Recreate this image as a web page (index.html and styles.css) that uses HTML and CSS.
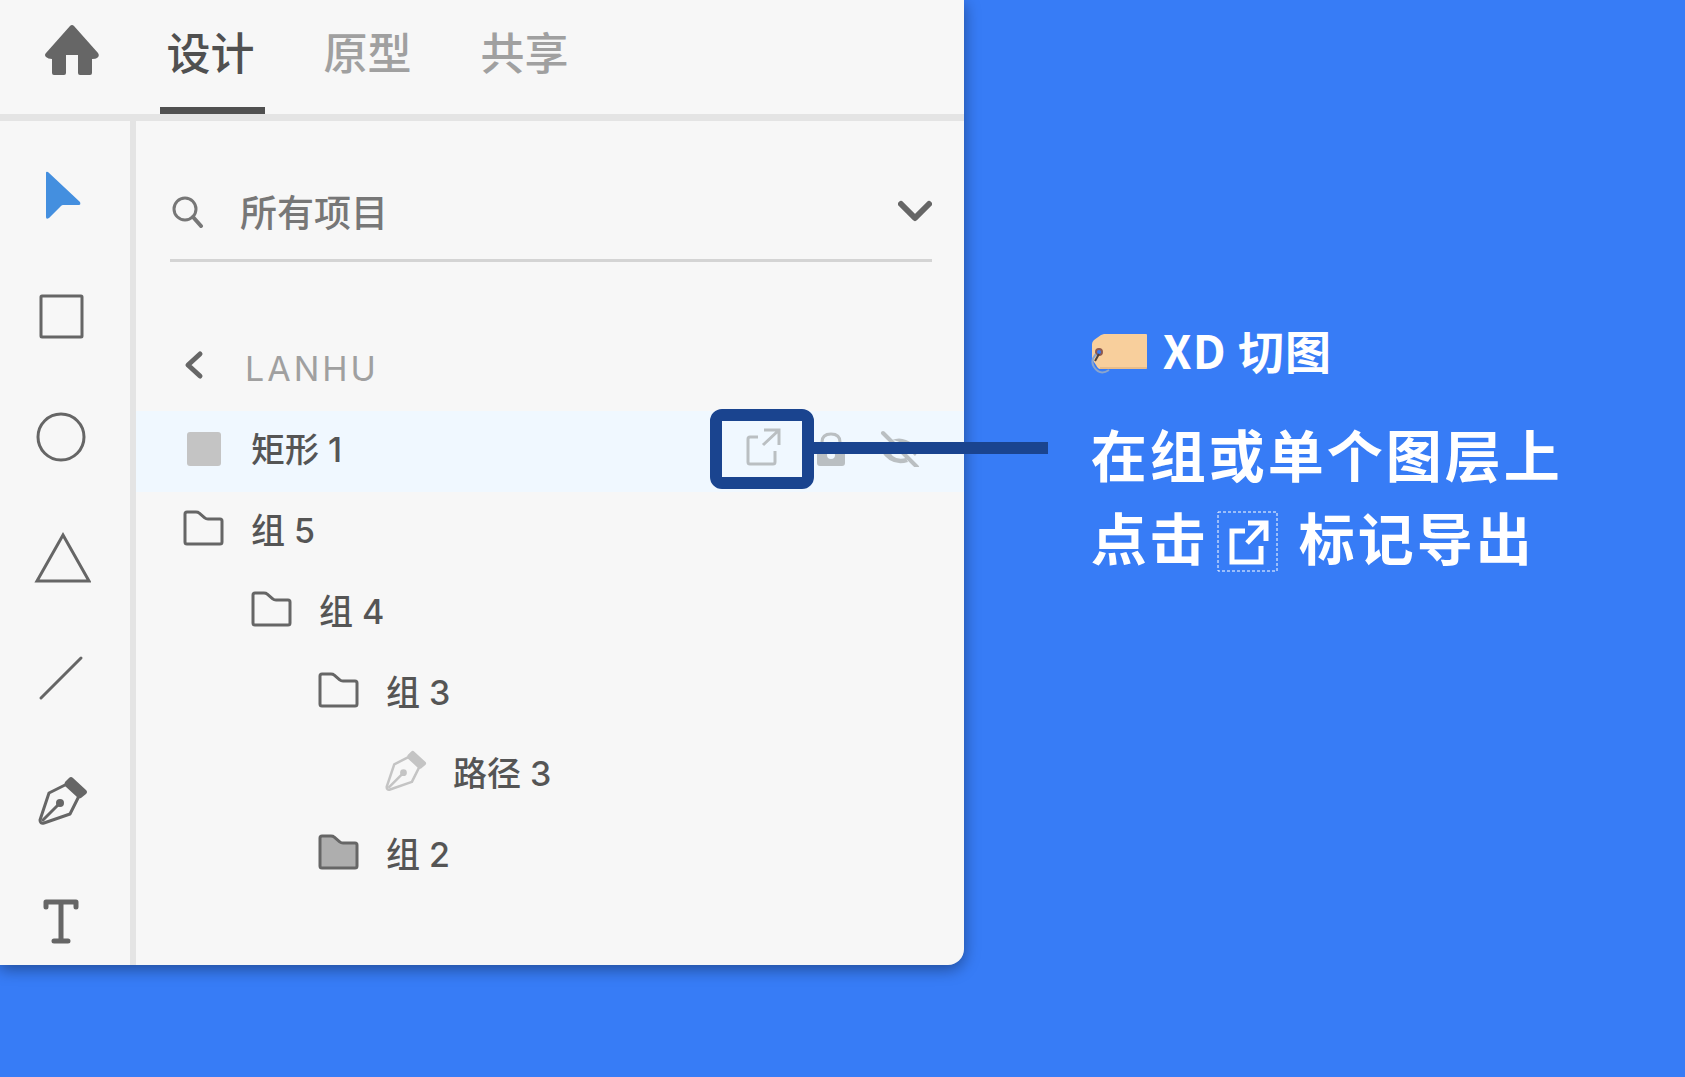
FILE: index.html
```html
<!DOCTYPE html>
<html lang="zh-CN">
<head>
  <meta charset="UTF-8" />
  <meta name="viewport" content="width=device-width, initial-scale=1" />
  <title>XD 切图</title>
  <link rel="stylesheet" href="styles.css">
</head>
<body>
  <!-- Shared icons -->
  <svg class="sprite" aria-hidden="true">
    <symbol id="folder" viewBox="0 0 42 42">
      <path d="M4 5H13Q15 5 16 6L22 11Q23 12 25 12H37Q39 12 39 14V35Q39 37 37 37H4Q2 37 2 35V7Q2 5 4 5Z" stroke="#666" stroke-width="3"/>
    </symbol>
    <symbol id="pen" viewBox="0 0 50 50">
      <path d="M29 8L11 17L2 44Q2 48 6 47L32 38L41 20" fill="none" stroke="currentColor" stroke-width="3" stroke-linejoin="round"/>
      <path d="M4 45L21 28" stroke="currentColor" stroke-width="3"/>
      <circle cx="22" cy="27" r="4" fill="currentColor"/>
      <path d="M31 2Q33 0 35 2L48 14Q50 16 48 18L43 22Q41 23 39 21L27 10Q26 8 27 6Z" fill="currentColor"/>
    </symbol>
  </svg>

  <main class="panel">
    <header class="top-bar">
      <button class="home" aria-label="主页">
        <svg width="56" height="50" viewBox="0 0 56 50"><path d="M26 1Q28 -1 30 1L54 28Q56 31 53 33Q52 34 48 34V48Q48 50 46 50H36Q34 50 34 48V30H22V48Q22 50 20 50H10Q8 50 8 48V34Q4 34 2 32Q0 30 2 28Z" fill="#666"/></svg>
      </button>
      <nav class="tabs">
        <button class="tab active">设计</button>
        <button class="tab">原型</button>
        <button class="tab">共享</button>
      </nav>
    </header>

    <div class="workspace">
      <aside class="tools">
        <button aria-label="选择">
          <svg width="60" height="60" viewBox="0 0 60 60"><path class="cursor" d="M15 7Q15 5 17 6L49 36Q50 39 48 39H32Q31 39 30 40L18 52Q15 54 15 51Z"/></svg>
        </button>
        <button aria-label="矩形">
          <svg width="60" height="60" viewBox="0 0 60 60"><rect x="10" y="9" width="41" height="41" rx="1"/></svg>
        </button>
        <button aria-label="椭圆">
          <svg width="60" height="60" viewBox="0 0 60 60"><circle cx="30" cy="29" r="23"/></svg>
        </button>
        <button aria-label="多边形">
          <svg width="60" height="60" viewBox="0 0 60 60"><path d="M32 6L58 52H6Z"/></svg>
        </button>
        <button aria-label="直线">
          <svg width="60" height="60" viewBox="0 0 60 60"><path d="M10 48L50 8" stroke-linecap="round"/></svg>
        </button>
        <button aria-label="钢笔">
          <svg width="60" height="60" viewBox="0 0 60 60"><use href="#pen" x="7" y="5" width="50" height="50"/></svg>
        </button>
        <button aria-label="文本">
          <svg width="60" height="60" viewBox="0 0 60 60"><path d="M15 15V10H45V15M30 10V49M23 49H37" stroke-width="5" stroke-linecap="round" stroke-linejoin="round"/></svg>
        </button>
      </aside>

      <section class="layers">
        <div class="search">
          <svg width="34" height="34" viewBox="0 0 34 34"><circle cx="15" cy="15" r="11" fill="none" stroke="#777" stroke-width="3"/><path d="M23 23L31 32" stroke="#777" stroke-width="4" stroke-linecap="round"/></svg>
          <input type="text" aria-label="搜索图层" value="所有项目" />
          <button aria-label="展开">
            <svg width="34" height="22" viewBox="0 0 34 22"><path d="M3 4L17 18L31 4" fill="none" stroke="#666" stroke-width="6" stroke-linecap="round" stroke-linejoin="round"/></svg>
          </button>
        </div>

        <button class="back">
          <svg width="42" height="36" viewBox="0 0 42 36"><path d="M17 4L5 15L17 26" fill="none" stroke="#666" stroke-width="5" stroke-linecap="round" stroke-linejoin="round"/></svg>
          <span>LANHU</span>
        </button>

        <ul class="layer-list">
          <li class="layer selected">
            <svg class="layer-icon" viewBox="0 0 42 42"><rect x="4" y="6" width="34" height="34" rx="3" fill="#c4c4c4"/></svg>
            <span>矩形 1</span>
            <div class="actions">
              <button class="export" aria-label="标记导出">
                <svg width="40" height="40" viewBox="0 0 40 40"><path d="M14 10H6Q4 10 4 12V35Q4 37 6 37H29Q31 37 31 35V24M20 3H35V18M34 4L19 18" fill="none" stroke="#babfc2" stroke-width="3"/></svg>
              </button>
              <button aria-label="锁定">
                <svg width="40" height="40" viewBox="0 0 40 40"><path d="M10 20V15Q10 7 19 7T28 15V20" fill="none" stroke="#babfc2" stroke-width="3"/><path fill="#babfc2" fill-rule="evenodd" d="M8 18H30Q33 18 33 21V36Q33 39 30 39H8Q5 39 5 36V21Q5 18 8 18ZM15 28A4 4 0 1 0 23 28A4 4 0 1 0 15 28Z"/></svg>
              </button>
              <button aria-label="隐藏">
                <svg width="40" height="40" viewBox="0 0 40 40"><path d="M12 13Q19 10 26 13Q34 16 39 24L35 29L25 19Q18 13 12 13Z" fill="#babfc2"/><path d="M1 24L7 19Q12 35 26 31L28 35Q11 40 1 24Z" fill="#babfc2"/><path d="M3 6L37 40" stroke="#babfc2" stroke-width="4" stroke-linecap="round"/></svg>
              </button>
            </div>
          </li>
          <li class="layer">
            <svg class="layer-icon"><use href="#folder" fill="none"/></svg>
            <span>组 5</span>
          </li>
          <li class="layer level-1">
            <svg class="layer-icon"><use href="#folder" fill="none"/></svg>
            <span>组 4</span>
          </li>
          <li class="layer level-2">
            <svg class="layer-icon"><use href="#folder" fill="none"/></svg>
            <span>组 3</span>
          </li>
          <li class="layer level-3">
            <svg class="layer-icon path-icon"><use href="#pen"/></svg>
            <span>路径 3</span>
          </li>
          <li class="layer level-2">
            <svg class="layer-icon"><use href="#folder" fill="#aeaeae"/></svg>
            <span>组 2</span>
          </li>
        </ul>
      </section>
    </div>
  </main>

  <section class="note">
    <h1>
      <svg width="58" height="52" viewBox="0 0 58 52">
        <path d="M13 11H55Q56 11 56 12V45Q56 46 55 46H9Q7 46 5 42L1 36V21Q1 19 3 17L10 12Z" fill="#f8cf9c"/>
        <path d="M56 45H9" stroke="#d9ab78" stroke-width="1"/>
        <circle cx="8" cy="29" r="3" fill="#377cf6" stroke="#8d5a50" stroke-width="2"/>
        <path d="M8 31L4 38" stroke="#4b4342" stroke-width="2"/>
        <path d="M5 31Q-1 38 3 44Q9 53 18 47" fill="none" stroke="#8ba5cc" stroke-width="2"/>
      </svg>
      <span>XD 切图</span>
    </h1>
    <p>
      在组或单个图层上<br>
      <span class="line">点击
        <svg class="mark" width="62" height="62" viewBox="0 0 62 62"><rect x="1" y="1" width="59" height="59" fill="none" stroke="#fff" stroke-dasharray="3 2"/><path d="M28 20H15V51H44V35M31 12H49V30M48 13L30 32" fill="none" stroke="#fff" stroke-width="5"/></svg>
        标记导出</span>
    </p>
  </section>
</body>
</html>
```
FILE: styles.css
```css
*,
*::before,
*::after {
  box-sizing: border-box;
}

body {
  margin: 0;
  min-height: 100vh;
  display: flex;
  align-items: flex-start;
  font-family: Inter, 'Noto Sans CJK SC', sans-serif;
  font-weight: 500;
  background: #377cf6;
  color: #555;
}

button {
  padding: 0;
  border: none;
  background: none;
  font: inherit;
  color: inherit;
  cursor: pointer;
}

svg {
  display: block;
  flex-shrink: 0;
}

.sprite {
  position: absolute;
  width: 0;
  height: 0;
}

.panel {
  width: 57.2%;
  background: #f7f7f7;
  border-radius: 0 0 16px 0;
  box-shadow: 0 4px 16px rgba(0, 0, 0, 0.4);
}

/* Top bar */
.top-bar {
  display: flex;
  height: 121px;
  padding-left: 44px;
  border-bottom: 7px solid #e4e4e4;
}

.home {
  padding-bottom: 14px;
}

.tabs {
  display: flex;
  gap: 52px;
  margin-left: 60px;
}

.tab {
  width: 105px;
  padding: 0 4px 6px 0;
  border-bottom: 7px solid transparent;
  font-size: 44px;
  color: #a0a0a0;
}

.tab.active {
  color: #505050;
  border-bottom-color: #505050;
}

.workspace {
  display: flex;
}

/* Tool column */
.tools {
  display: flex;
  flex-direction: column;
  align-items: center;
  gap: 61px;
  width: 136px;
  padding: 45px 8px 13px 0;
  border-right: 6px solid #e4e4e4;
  color: #666;
}

.tools svg {
  fill: none;
  stroke: #666;
  stroke-width: 3;
}

.tools use {
  stroke: none;
}

.tools .cursor {
  fill: #448fdf;
  stroke: none;
}

/* Layers */
.layers {
  flex: 1;
  min-width: 0;
}

.search {
  display: flex;
  align-items: center;
  height: 101px;
  margin: 40px 32px 0 34px;
  padding-top: 2px;
  border-bottom: 3px solid #d4d4d4;
}

.search input {
  flex: 1;
  min-width: 0;
  margin-left: 36px;
  padding: 0;
  border: none;
  outline: none;
  background: none;
  font: inherit;
  font-size: 37px;
  color: #777;
}

.back {
  display: flex;
  align-items: center;
  gap: 20px;
  height: 68px;
  margin: 72px 0 9px 47px;
  font-size: 34px;
  font-weight: normal;
  letter-spacing: 3px;
  color: #a0a0a0;
}

.layer-list {
  margin: 0;
  padding: 0;
  list-style: none;
}

.layer {
  display: flex;
  align-items: center;
  gap: 26px;
  height: 81px;
  padding: 0 44px 9px 47px;
  font-size: 34px;
}

.layer.selected {
  background: #f0f8ff;
}

.layer-icon {
  width: 42px;
  height: 42px;
}

.path-icon {
  color: #c4c4c4;
}

.level-1 {
  padding-left: 115px;
}

.level-2 {
  padding-left: 182px;
}

.level-3 {
  padding-left: 249px;
}

.actions {
  display: flex;
  gap: 28px;
  margin-left: auto;
}

.export {
  position: relative;
}

/* Frame round the export button and the line that leads to the note */
.export::before {
  content: "";
  position: absolute;
  top: -18px;
  left: -34px;
  width: 104px;
  height: 80px;
  border: 12px solid #1a448f;
  border-radius: 12px;
}

.export::after {
  content: "";
  position: absolute;
  z-index: 1;
  top: 15px;
  left: 69px;
  width: 235px;
  height: 12px;
  background: #1a448f;
}

/* Note */
.note {
  flex: 1;
  padding: 319px 0 0 127px;
  color: #fff;
  font-weight: bold;
  font-family: 'Noto Sans CJK SC', sans-serif;
  white-space: nowrap;
}

.note h1 {
  display: flex;
  align-items: center;
  gap: 14px;
  height: 60px;
  margin: 0 0 32px;
  font-size: 46px;
  letter-spacing: 1px;
}

.note p {
  margin: 0;
  font-size: 56px;
  line-height: 83px;
  letter-spacing: 3px;
}

.line {
  display: flex;
  align-items: center;
}

.mark {
  margin: 12px 20px 0 8px;
}
```
